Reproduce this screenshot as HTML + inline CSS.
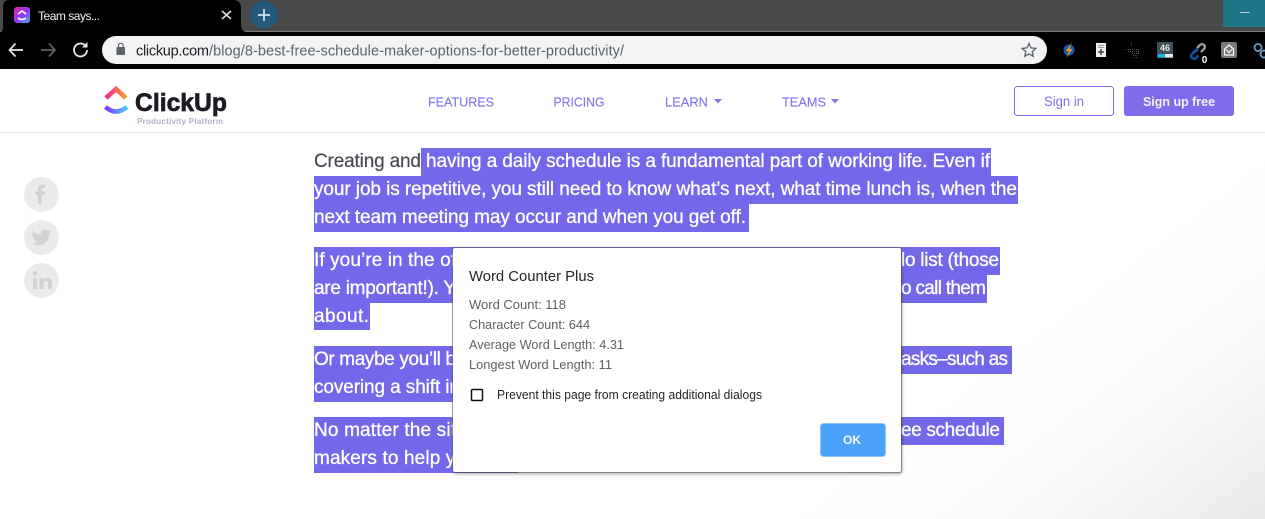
<!DOCTYPE html>
<html lang="en">
<head>
<meta charset="utf-8">
<title>Team says...</title>
<style>
html,body{margin:0;padding:0;width:1265px;height:519px;overflow:hidden;background:#fff;font-family:"Liberation Sans",sans-serif}
svg{position:absolute;left:0;top:0}
#dlg{position:absolute;left:453px;top:248px;width:448px;height:224px;background:#fff;border-radius:2px;box-shadow:0 0 0 1px rgba(90,90,90,.55),1px 2px 3px rgba(0,0,0,.35)}
</style>
</head>
<body>
<svg width="1265" height="519" viewBox="0 0 1265 519" xmlns="http://www.w3.org/2000/svg" font-family="Liberation Sans, sans-serif">
<defs>
<linearGradient id="corner" x1="1040" y1="320" x2="1220" y2="555" gradientUnits="userSpaceOnUse">
<stop offset="0" stop-color="#ffffff"/><stop offset=".4" stop-color="#fcfcfc"/><stop offset="1" stop-color="#e9eaeb"/>
</linearGradient>
<linearGradient id="lg1" x1="105" y1="0" x2="127" y2="0" gradientUnits="userSpaceOnUse"><stop offset="0" stop-color="#f51e9e"/><stop offset="1" stop-color="#ffa424"/></linearGradient>
<linearGradient id="lg2" x1="105" y1="0" x2="127" y2="0" gradientUnits="userSpaceOnUse"><stop offset="0" stop-color="#8930fd"/><stop offset="1" stop-color="#49ccf9"/></linearGradient>
<linearGradient id="fav" x1="0" y1="0" x2="1" y2="1"><stop offset="0" stop-color="#e81fa5"/><stop offset=".55" stop-color="#8f3cf5"/><stop offset="1" stop-color="#39b6f5"/></linearGradient>
</defs>

<!-- browser chrome -->
<rect width="1265" height="32" fill="#494949"/>
<rect y="31" width="1265" height="1" fill="#7a7a7a"/>
<rect x="1223" width="42" height="27" fill="#1f7588"/>
<rect x="1240" y="12" width="10" height="1" fill="#a9cbd3"/>
<path d="M0 32C2 32 3 30 3 27V7C3 3 5 0 9 0H233C238 0 241 3 241 7V25C241 29 243 32 247 32Z" fill="#000"/>
<rect y="32" width="1265" height="37" fill="#000"/>
<rect x="14" y="7" width="16" height="16" rx="3" fill="url(#fav)"/>
<path d="M18 14l4-3 4 3M18 18q4 3 8 0" stroke="#fff" stroke-width="1.6" fill="none"/>
<text x="38" y="20" font-size="12" fill="#f1f3f4" textLength="62">Team says...</text>
<path d="M222 11l9 8M231 11l-9 8" stroke="#dcdfe2" stroke-width="1.6"/>
<circle cx="264" cy="15" r="14" fill="#235a7b"/>
<path d="M264 9v12M258 15h12" stroke="#cfe3ef" stroke-width="1.7"/>

<!-- toolbar -->
<path d="M9.500 50h13.500M15.500 43.500L9.500 50l6 6.500" stroke="#e8eaed" stroke-width="1.700" fill="none"/>
<path d="M41 50h14M49 43.500l6 6.500-6 6.500" stroke="#5f6368" stroke-width="1.700" fill="none"/>
<path d="M87 50a6.500 6.500 0 1 1-2-4.700" stroke="#e8eaed" stroke-width="1.800" fill="none"/>
<path d="M87.500 42v5.500h-5.500z" fill="#e8eaed"/>
<rect x="102" y="36" width="945" height="28" rx="14" fill="#f1f3f4"/>
<rect x="116.500" y="47" width="8.500" height="8" rx="1" fill="#5f6368"/>
<path d="M118.500 47v-1.500a2.300 2.300 0 0 1 4.600 0V47" stroke="#5f6368" stroke-width="1.200" fill="none"/>
<text x="136" y="55.500" font-size="14.500" fill="#202124" textLength="73">clickup.com</text>
<text x="209" y="55.500" font-size="14.500" fill="#5f6368" textLength="415">/blog/8-best-free-schedule-maker-options-for-better-productivity/</text>
<path d="M1029 43.500l2 4.400 4.800.5-3.600 3.200 1 4.700-4.200-2.400-4.200 2.400 1-4.700-3.600-3.200 4.800-.5z" stroke="#5f6368" stroke-width="1.300" fill="none"/>

<!-- extensions -->
<circle cx="1069" cy="50" r="5.500" fill="#1c5cab"/>
<path d="M1072 42.500l-6 8.500h3l-2.500 7 6-9h-3z" fill="#f59a23"/>
<rect x="1096" y="43" width="10" height="14" fill="#eeeeee"/>
<path d="M1098 45.500h6M1098 47.500h6" stroke="#777" stroke-width=".8"/>
<path d="M1101 49v6M1098 52h6" stroke="#444" stroke-width="1.500"/>
<g fill="#555">
<rect x="1131" y="43" width="1" height="1"/><rect x="1131" y="45" width="1" height="1"/>
<rect x="1126" y="49" width="1" height="1"/><rect x="1128" y="49" width="1" height="1"/><rect x="1130" y="49" width="1" height="1"/><rect x="1132" y="49" width="1" height="1"/><rect x="1134" y="49" width="1" height="1"/><rect x="1136" y="49" width="1" height="1"/><rect x="1138" y="49" width="1" height="1"/>
<rect x="1128" y="51" width="1" height="1"/><rect x="1130" y="51" width="1" height="1"/><rect x="1132" y="51" width="1" height="1"/><rect x="1134" y="51" width="1" height="1"/><rect x="1136" y="51" width="1" height="1"/><rect x="1138" y="51" width="1" height="1"/>
<rect x="1132" y="53" width="1" height="1"/><rect x="1134" y="53" width="1" height="1"/><rect x="1136" y="53" width="1" height="1"/><rect x="1138" y="53" width="1" height="1"/>
<rect x="1133" y="55" width="1" height="1"/><rect x="1135" y="55" width="1" height="1"/><rect x="1137" y="55" width="1" height="1"/>
<rect x="1134" y="57" width="1" height="1"/><rect x="1136" y="57" width="1" height="1"/>
</g>
<rect x="1157" y="42" width="16" height="16" fill="#3f5058"/>
<text x="1165" y="51" font-size="9" font-weight="bold" fill="#e6e6e6" text-anchor="middle">46</text>
<rect x="1158" y="54" width="15" height="3.500" fill="#e4e4e4"/><rect x="1158" y="54" width="7" height="3.500" fill="#13b5ea"/>
<path d="M1197 49l-5 5a2.800 2.800 0 0 0 4 4l2.500-2.500" stroke="#0f4fa8" stroke-width="2.600" fill="none"/>
<path d="M1195 52l3-3" stroke="#0f4fa8" stroke-width="2.600"/>
<path d="M1197 48l3-3a2.800 2.800 0 0 1 4 4l-3 3" stroke="#9a9a9a" stroke-width="2.400" fill="none"/>
<text x="1204.500" y="63" font-size="10" font-weight="bold" fill="#fff" text-anchor="middle">0</text>
<rect x="1221" y="42" width="16" height="16" rx="2" fill="#7b7878"/>
<path d="M1229 45l4.500 4v6h-9v-6zM1226 49.500l3 3 3-3" stroke="#fff" stroke-width="1.200" fill="none"/>
<circle cx="1258" cy="47.500" r="3.500" stroke="#6a9ac4" stroke-width="1.800" fill="none"/>
<circle cx="1264" cy="54" r="3.500" stroke="#6a9ac4" stroke-width="1.800" fill="none"/>

<!-- page -->
<rect y="69" width="1265" height="450" fill="url(#corner)"/>
<rect y="69" width="1265" height="63" fill="#fff"/>
<rect y="132" width="1265" height="1" fill="#e9e9e9"/>

<!-- logo -->
<path d="M106 98L116 89l10 9" stroke="url(#lg1)" stroke-width="4.600" fill="none"/>
<path d="M105.500 107q10.500 9 21.500 0" stroke="url(#lg2)" stroke-width="4.600" fill="none"/>
<text x="135" y="111" font-size="25" font-weight="bold" fill="#1a1c23" stroke="#1a1c23" stroke-width=".7" textLength="92" lengthAdjust="spacingAndGlyphs">ClickUp</text>
<text x="137" y="124" font-size="8" font-weight="bold" fill="#b2aecb" textLength="86">Productivity Platform</text>

<!-- nav -->
<g font-size="13" fill="#8279ee" stroke="#8279ee" stroke-width=".15">
<text x="428" y="106.500" textLength="66" lengthAdjust="spacingAndGlyphs">FEATURES</text>
<text x="553.500" y="106.500" textLength="51" lengthAdjust="spacingAndGlyphs">PRICING</text>
<text x="665" y="106.500" textLength="43" lengthAdjust="spacingAndGlyphs">LEARN</text>
<text x="782" y="106.500" textLength="44" lengthAdjust="spacingAndGlyphs">TEAMS</text>
</g>
<path d="M714 99h8l-4 4.500zM831 99h8l-4 4.500z" fill="#8279ee"/>
<rect x="1014.500" y="86.500" width="99" height="29" rx="3" fill="#fff" stroke="#7f6ceb"/>
<text x="1064" y="106" font-size="13.500" fill="#7f6ceb" text-anchor="middle" textLength="40" lengthAdjust="spacingAndGlyphs">Sign in</text>
<rect x="1124" y="86" width="110" height="30" rx="3" fill="#7f6ceb"/>
<text x="1179" y="106" font-size="13" font-weight="bold" fill="#f4f2fe" text-anchor="middle" textLength="72" lengthAdjust="spacingAndGlyphs">Sign up free</text>

<!-- share -->
<circle cx="41.500" cy="194.500" r="17.500" fill="#ebebeb"/>
<circle cx="41.500" cy="237.500" r="17.500" fill="#ebebeb"/>
<circle cx="41.500" cy="280.500" r="17.500" fill="#ebebeb"/>
<path d="M38 204v-9h-2.500v-3.500H38v-2.500c0-3 1.700-4.500 4.300-4.500h3v3.500h-2c-1.100 0-1.500.5-1.500 1.600v1.900h3.400l-.5 3.500h-2.900v9z" fill="#d2d2d2"/>
<path d="M33 232c3 1.700 5 2.600 8 2.800-.5-3.200 1.700-5.300 4-5.300 1.200 0 2.200.5 3 1.300l2.800-1-1.500 2.500 2-.5-1.900 2c.2 6-4.500 11.500-11 11.500-2.400 0-4.500-.6-6.400-1.800 2 .1 4-.4 5.500-1.700-2 0-3.400-1.200-4-3h1.800c-2-.6-3.400-2.300-3.400-4.300l1.900.5c-1.900-1.500-2.300-3.600-.8-5.400z" fill="#d2d2d2"/>
<rect x="33" y="278" width="4" height="11" fill="#d2d2d2"/>
<circle cx="35" cy="273.500" r="2.300" fill="#d2d2d2"/>
<path d="M39.500 278h3.800v1.700c.8-1.300 2.200-2 3.900-2 3.200 0 4.800 2 4.800 5.400v5.900h-4v-5.400c0-1.700-.6-2.600-2-2.600s-2.500 1-2.500 2.700v5.300h-4z" fill="#d2d2d2"/>

<!-- selection -->
<g fill="#7368ea">
<rect x="421" y="148" width="570" height="28"/>
<rect x="314" y="176" width="704" height="28"/>
<rect x="314" y="204" width="435" height="28"/>
<rect x="314" y="247" width="686" height="28"/>
<rect x="314" y="275" width="673" height="28"/>
<rect x="314" y="303" width="56" height="27"/>
<rect x="314" y="346" width="698" height="28"/>
<rect x="314" y="374" width="200" height="28"/>
<rect x="314" y="417" width="690" height="28"/>
<rect x="314" y="445" width="204" height="28"/>
</g>

<!-- article -->
<g font-size="19">
<text x="314" y="167" fill="#4a4a55" stroke="#4a4a55" stroke-width=".2" textLength="107">Creating and</text>
<g fill="#fff" stroke="#fff" stroke-width=".3">
<text x="426" y="167" textLength="564">having a daily schedule is a fundamental part of working life. Even if</text>
<text x="314" y="195" textLength="703">your job is repetitive, you still need to know what’s next, what time lunch is, when the</text>
<text x="314" y="223" textLength="432">next team meeting may occur and when you get off.</text>
<text x="314" y="266" textLength="142">If you’re in the of</text>
<text x="901" y="266" textLength="98">lo list (those</text>
<text x="314" y="294" textLength="142">are important!). Y</text>
<text x="901" y="294" textLength="85">o call them</text>
<text x="314" y="322" textLength="55">about.</text>
<text x="314" y="365" textLength="142">Or maybe you’ll b</text>
<text x="901" y="365" textLength="107">asks–such as</text>
<text x="314" y="393" textLength="146">covering a shift in</text>
<text x="314" y="436" textLength="142">No matter the sit</text>
<text x="901" y="436" textLength="99">ee schedule</text>
<text x="314" y="464" textLength="152">makers to help yo</text>
</g>
</g>
</svg>

<div id="dlg">
<svg width="448" height="224" viewBox="0 0 448 224" xmlns="http://www.w3.org/2000/svg" font-family="Liberation Sans, sans-serif">
<text x="16" y="33" font-size="14.500" fill="#25252a" textLength="125" lengthAdjust="spacingAndGlyphs">Word Counter Plus</text>
<g font-size="12.500" fill="#5f5f66">
<text x="16" y="61" textLength="97" lengthAdjust="spacingAndGlyphs">Word Count: 118</text>
<text x="16" y="81" textLength="121" lengthAdjust="spacingAndGlyphs">Character Count: 644</text>
<text x="16" y="101" textLength="155" lengthAdjust="spacingAndGlyphs">Average Word Length: 4.31</text>
<text x="16" y="121" textLength="143" lengthAdjust="spacingAndGlyphs">Longest Word Length: 11</text>
</g>
<rect x="18.500" y="141.500" width="11" height="11" rx="1" fill="#fff" stroke="#111" stroke-width="1.500"/>
<text x="44" y="151" font-size="12.500" fill="#25252a" textLength="265" lengthAdjust="spacingAndGlyphs">Prevent this page from creating additional dialogs</text>
<rect x="367.500" y="175.500" width="65" height="33" rx="3" fill="#4aa1f8" stroke="#8fc5f8"/>
<text x="399" y="196" font-size="12" font-weight="bold" fill="#f4f9ff" text-anchor="middle">OK</text>
</svg>
</div>
</body>
</html>
